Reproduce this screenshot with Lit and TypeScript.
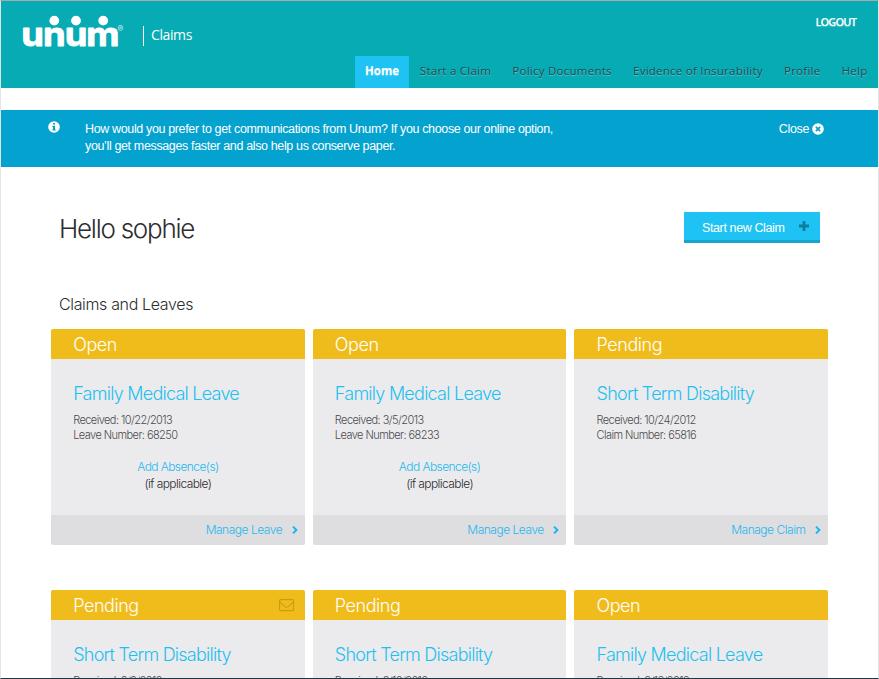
import { LitElement, html, svg, css, nothing } from "lit";
import { customElement, property } from "lit/decorators.js";

interface Claim {
  status: string;
  title: string;
  received: string;
  kind: "Leave" | "Claim";
  number: string;
  absence?: boolean;
  mail?: boolean;
}

const CLAIMS: Claim[] = [
  { status: "Open", title: "Family Medical Leave", received: "10/22/2013", kind: "Leave", number: "68250", absence: true },
  { status: "Open", title: "Family Medical Leave", received: "3/5/2013", kind: "Leave", number: "68233", absence: true },
  { status: "Pending", title: "Short Term Disability", received: "10/24/2012", kind: "Claim", number: "65816" },
  { status: "Pending", title: "Short Term Disability", received: "9/9/2012", kind: "Claim", number: "65790", mail: true },
  { status: "Pending", title: "Short Term Disability", received: "8/16/2012", kind: "Claim", number: "65702" },
  { status: "Open", title: "Family Medical Leave", received: "8/16/2012", kind: "Leave", number: "65701", absence: true },
];

const NAV = ["Home", "Start a Claim", "Policy Documents", "Evidence of Insurability", "Profile", "Help"];

@customElement("claim-card")
export class ClaimCard extends LitElement {
  @property({ attribute: false }) claim!: Claim;

  static styles = css`
    :host { display: flex; flex-direction: column; height: 216px; border-radius: 2px; overflow: hidden; background: #ebebed; min-width: 0; }
    .status { box-sizing: border-box; height: 30px; flex: none; display: flex; align-items: center; justify-content: space-between; background: #f0bc1b; color: #fff; padding: 1px 10px 0 22.2px; font-size: 18px; letter-spacing: -0.45px; }
    .body { flex: 1; padding: 21px 22px 0 22.2px; }
    .title { font-size: 18px; line-height: 27px; letter-spacing: -0.75px; color: #1fc0f0; white-space: nowrap; }
    .meta { margin-top: 6px; font-size: 11px; line-height: 15px; letter-spacing: -0.56px; color: #4c4c4e; white-space: nowrap; }
    .absence { margin-top: 15px; text-align: center; font-size: 12px; line-height: 17px; letter-spacing: -0.58px; color: #2c2c2e; }
    .link { color: #1fb8ee; }
    .foot { box-sizing: border-box; height: 30px; flex: none; display: flex; align-items: center; justify-content: flex-end; gap: 9.5px; padding: 0 7px 1px 0; background: #dedee0; color: #1fb8ee; font-size: 12px; letter-spacing: -0.48px; }
    svg { display: block; }
  `;

  render() {
    const c = this.claim;
    return html`
      <div class="status">
        <span>${c.status}</span>
        ${c.mail
          ? html`<svg width="16" height="13" viewBox="0 0 16 13" fill="none" stroke="#c99c13" stroke-width="1.1"><rect x="0.6" y="0.6" width="14" height="11" rx="1" /><path d="M0.6 2.8 L6 7.6 Q7.6 8.8 9.2 7.6 L14.6 2.8" /></svg>`
          : nothing}
      </div>
      <div class="body">
        <div class="title">${c.title}</div>
        <div class="meta">Received: ${c.received}<br />${c.kind} Number: ${c.number}</div>
        ${c.absence ? html`<div class="absence"><span class="link">Add Absence(s)</span><br />(if applicable)</div>` : nothing}
      </div>
      <div class="foot">
        <span>Manage ${c.kind}</span>
        <svg width="6" height="8" viewBox="0 0 6 8" fill="none" stroke="#16b6ec" stroke-width="1.9"><path d="M1 0.6 L4.4 4 L1 7.4" /></svg>
      </div>
    `;
  }
}

@customElement("app-root")
export class AppRoot extends LitElement {
  static styles = css`
    :host { display: block; box-sizing: border-box; width: 879px; height: 679px; overflow: hidden; background: #fff; border: 1px solid #e4e4e4; border-top-color: #a9a9a9; border-bottom-color: #26323f; font-family: Inter, "Liberation Sans", sans-serif; font-weight: 300; color: #2d2d2f; }
    svg { display: block; overflow: visible; }
    header { height: 87px; background: #07abb3; display: flex; flex-direction: column; justify-content: space-between; font-family: "Open Sans", "Noto Sans", sans-serif; }
    .top { display: flex; align-items: flex-start; padding: 13px 22px 0 20px; }
    .claims { margin: 12px 0 0 14px; height: 20px; border-left: 1px solid #fff; padding-left: 7px; font-size: 14px; line-height: 17px; font-weight: 400; color: #fff; letter-spacing: -0.4px; }
    .logout { margin-left: auto; font-size: 11px; line-height: 16px; font-weight: 600; color: #fff; letter-spacing: -0.85px; text-shadow: 0 1px 1px rgba(255,255,255,.35); }
    nav { display: flex; justify-content: flex-end; height: 32px; }
    .item { padding: 0 10.5px 0 10.7px; line-height: 29px; font-size: 11.5px; font-weight: 400; letter-spacing: 0.25px; color: #1d4850; text-shadow: 0 1px 1px rgba(255,255,255,.35); white-space: nowrap; }
    .item.active { background: #1ec3f3; color: #fff; font-weight: 700; padding: 0 10px; letter-spacing: 0.05px; }
    .notice { margin-top: 22px; height: 57px; box-sizing: border-box; background: #04a2cf; color: #fff; display: flex; align-items: flex-start; padding: 11px 54px 0 47px; font-family: "Liberation Sans", Arial, sans-serif; font-size: 12.5px; line-height: 17px; font-weight: 400; letter-spacing: -0.36px; }
    .info { margin: 0 25px 0 0; }
    .notice p { margin: 0; white-space: nowrap; }
    .close { margin-left: auto; display: flex; align-items: center; gap: 3px; }
    .close svg { margin-top: -2px; }
    .hello { margin: 44px 58px 0; display: flex; justify-content: space-between; align-items: flex-start; }
    h1 { margin: 0; font-size: 26px; line-height: 36px; font-weight: 300; letter-spacing: -1.25px; }
    .start { box-sizing: border-box; margin-top: 1px; width: 136px; height: 31px; background: #1ec3f3; border-bottom: 3px solid #16a5cd; color: #fff; display: flex; justify-content: space-between; padding: 0 11px 0 18px; font-family: "Liberation Sans", Arial, sans-serif; font-size: 12.5px; font-weight: 400; line-height: 32px; letter-spacing: -0.38px; }
    .start svg { margin-top: 9px; }
    h2 { margin: 47px 58px 0; font-size: 16px; line-height: 20px; font-weight: 300; letter-spacing: -0.35px; }
    .grid { margin: 15px 50px 0; display: grid; grid-template-columns: repeat(3, 1fr); column-gap: 8px; row-gap: 45px; }
  `;

  private logo() {
    const heads = [54.3, 76, 103.2];
    const letters: [string, number][] = [["u", 21.3], ["n", 43], ["u", 64.8], ["m", 86.2]];
    return html`<svg width="108" height="36" viewBox="21 13 108 36">
      ${letters.map(([ch, x]) => svg`<text transform="translate(${x} 45.2) scale(1.07 .96)" font-family="Inter, sans-serif" font-weight="700" font-size="34" fill="#fff" stroke="#fff" stroke-width=".9" stroke-linejoin="round">${ch}</text>`)}
      ${heads.map((x) => svg`<circle cx=${x} cy="19.6" r="5.5" fill="#fff" stroke="#07abb3" stroke-width="1.2" />`)}
      <text x="117.6" y="31" font-family="Inter, sans-serif" font-size="8.5" font-weight="400" fill="#d8f2f3">®</text>
    </svg>`;
  }

  render() {
    return html`
      <header>
        <div class="top">
          ${this.logo()}
          <div class="claims">Claims</div>
          <div class="logout">LOGOUT</div>
        </div>
        <nav>${NAV.map((n, i) => html`<div class="item ${i === 0 ? "active" : ""}">${n}</div>`)}</nav>
      </header>
      <section class="notice">
        <svg class="info" width="12" height="12" viewBox="0 0 12 12"><circle cx="6" cy="6" r="5.8" fill="#fff" /><path d="M5 2h2v1.6H5zM4.3 4.8H7V8.4h.8v1.2H4.3V8.4H5V6h-.7z" fill="#04a2cf" /></svg>
        <p>How would you prefer to get communications from Unum? If you choose our online option,<br />you’ll get messages faster and also help us conserve paper.</p>
        <div class="close">
          <span>Close</span>
          <svg width="12" height="12" viewBox="0 0 12 12"><circle cx="6" cy="6" r="5.8" fill="#fff" /><path d="M3.9 3.9l4.2 4.2M8.1 3.9L3.9 8.1" stroke="#04a2cf" stroke-width="1.8" /></svg>
        </div>
      </section>
      <div class="hello">
        <h1>Hello sophie</h1>
        <div class="start"><span>Start new Claim</span><svg width="10" height="10" viewBox="0 0 10 10"><path d="M5 0v10M0 5h10" stroke="#0c7d9f" stroke-width="2.8" /></svg></div>
      </div>
      <h2>Claims and Leaves</h2>
      <div class="grid">${CLAIMS.map((c) => html`<claim-card .claim=${c}></claim-card>`)}</div>
    `;
  }
}
